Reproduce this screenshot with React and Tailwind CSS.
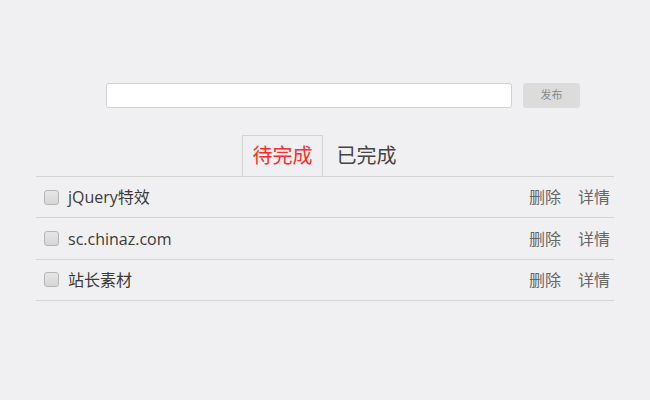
import React, { useState } from 'react';

const FONT = { fontFamily: '"Open Sans", "Noto Sans CJK SC", sans-serif' };

const initialTodos = [
  { id: 1, text: 'jQuery特效', done: false },
  { id: 2, text: 'sc.chinaz.com', done: false },
  { id: 3, text: '站长素材', done: false },
];

const Checkbox = ({ checked, onChange }) => (
  <button
    onClick={onChange}
    className="w-[15px] h-[15px] rounded-[3px] border border-[#b5b5b5] bg-gradient-to-b from-[#e6e6e6] to-[#d6d6d6] shrink-0"
  >
    {checked && <span className="block text-[11px] leading-[13px] text-[#444]">✓</span>}
  </button>
);

export default function App() {
  const [todos, setTodos] = useState(initialTodos);
  const [tab, setTab] = useState('todo');
  const [text, setText] = useState('');

  const publish = () => {
    if (!text.trim()) return;
    setTodos([...todos, { id: Date.now(), text: text.trim(), done: false }]);
    setText('');
  };

  const list = todos.filter((t) => (tab === 'todo' ? !t.done : t.done));

  return (
    <div className="w-[650px] h-[400px] bg-[#f0f0f2] overflow-hidden" style={FONT}>
      {/* input row */}
      <div className="flex items-center pt-[83px] pl-[106px]">
        <input
          value={text}
          onChange={(e) => setText(e.target.value)}
          className="w-[406px] h-[25px] bg-white border border-[#d2d2d2] rounded-[3px] outline-none px-2 text-sm"
        />
        <button
          onClick={publish}
          className="ml-[11px] w-[57px] h-[25px] bg-[#dcdcdc] rounded-[3px] text-[11px] text-[#888]"
        >
          发布
        </button>
      </div>

      {/* tabs */}
      <div className="flex justify-center mt-[27px] pr-[4px]">
        <button
          onClick={() => setTab('todo')}
          className={`h-[41px] w-[81px] text-[20px] border border-b-0 ${
            tab === 'todo' ? 'border-[#d4d4d4] text-[#ff2a2a]' : 'border-transparent text-[#444]'
          }`}
        >
          待完成
        </button>
        <button
          onClick={() => setTab('done')}
          className={`h-[41px] w-[81px] pl-[6px] text-[20px] border border-b-0 ${
            tab === 'done' ? 'border-[#d4d4d4] text-[#ff2a2a]' : 'border-transparent text-[#444]'
          }`}
        >
          已完成
        </button>
      </div>

      {/* list */}
      <ul className="mx-[36px] border-t border-[#d4d4d4]">
        {list.map((t) => (
          <li key={t.id} className="h-[41.4px] flex items-center border-b border-[#d4d4d4] pl-[8px] pr-[4px]">
            <Checkbox
              checked={t.done}
              onChange={() => setTodos(todos.map((x) => (x.id === t.id ? { ...x, done: !x.done } : x)))}
            />
            <span className="ml-[9px] text-[16px] text-[#3a3a3a]">{t.text}</span>
            <span className="ml-auto text-[16px] text-[#666] cursor-pointer" onClick={() => setTodos(todos.filter((x) => x.id !== t.id))}>
              删除
            </span>
            <span className="ml-[17px] text-[16px] text-[#666] cursor-pointer">详情</span>
          </li>
        ))}
      </ul>
    </div>
  );
}
